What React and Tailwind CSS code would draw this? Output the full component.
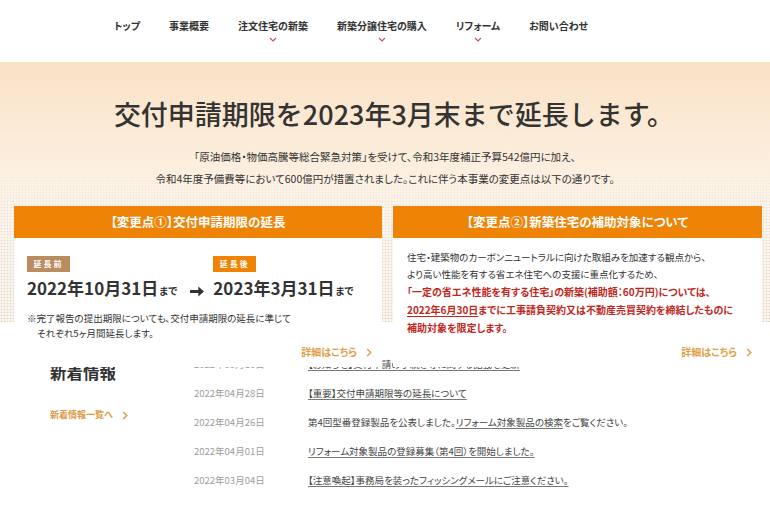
import React from 'react';

const font = { fontFamily: '"Noto Sans CJK JP", "Noto Sans", sans-serif' };

const navItems = [
    { label: 'トップ', sub: false },
    { label: '事業概要', sub: false },
    { label: '注文住宅の新築', sub: true },
    { label: '新築分譲住宅の購入', sub: true },
    { label: 'リフォーム', sub: true },
    { label: 'お問い合わせ', sub: false },
];

const news = [
    { date: '2022年05月10日', parts: [{ t: '【お知らせ】交付申請の手続き等に関する記載を更新', link: true }] },
    { date: '2022年04月28日', parts: [{ t: '【重要】交付申請期限等の延長について', link: true }] },
    { date: '2022年04月26日', parts: [{ t: '第4回型番登録製品を公表しました。', link: false }, { t: 'リフォーム対象製品の検索', link: true }, { t: 'をご覧ください。', link: false }] },
    { date: '2022年04月01日', parts: [{ t: 'リフォーム対象製品の登録募集（第4回）を開始しました。', link: true }] },
    { date: '2022年03月04日', parts: [{ t: '【注意喚起】事務局を装ったフィッシングメールにご注意ください。', link: true }] },
];

const Chevron = ({ className }) => (
    <svg viewBox="0 0 8 5" className={className} fill="none" stroke="currentColor" strokeWidth="1.2">
        <path d="M1 1l3 3 3-3" />
    </svg>
);

const RightChevron = () => (
    <svg viewBox="0 0 6 10" className="w-[6px] h-[9px] ml-[9px]" fill="none" stroke="currentColor" strokeWidth="1.6">
        <path d="M1 1l4 4-4 4" />
    </svg>
);

const MoreLink = () => (
    <div className="mt-auto flex justify-end items-center pr-[10px] pb-[8px] text-[10px] leading-[14px] font-bold text-[#e0a04a]">
        詳細はこちら
        <RightChevron />
    </div>
);

const App = () => {
    return (
        <div className="w-[770px] min-h-[510px] bg-white text-[#333] [font-feature-settings:'palt']" style={font}>
            {/* Header nav */}
            <nav className="h-[62px] bg-white flex pl-[114px] pt-[19px] gap-[29px]">
                {navItems.map((item) => (
                    <div key={item.label} className="flex flex-col items-center">
                        <span className="text-[10px] leading-[14px] font-bold text-[#333]">{item.label}</span>
                        {item.sub && <Chevron className="w-[8px] h-[5px] mt-[4px] text-[#c9505a]" />}
                    </div>
                ))}
            </nav>

            {/* Hero */}
            <section className="relative z-10 h-[260px] bg-[#fdf6ee] bg-[linear-gradient(180deg,#f9e2c5_0%,#fcefdf_40%,rgba(253,246,238,0.5)_58%,rgba(253,246,238,0.2)_100%),radial-gradient(circle,#d8cab8_0.8px,transparent_1.1px)] [background-size:100%_100%,3px_3px]">
                <h1 className="pt-[37px] pl-[18px] text-center text-[27px] leading-[30px] font-medium text-[#333] [font-feature-settings:normal]">
                    交付申請期限を2023年3月末まで延長します。
                </h1>
                <div className="mt-[17px] text-center text-[10.5px] leading-[22px] text-[#333]">
                    <p>「原油価格・物価高騰等総合緊急対策」を受けて、令和3年度補正予算542億円に加え、</p>
                    <p>令和4年度予備費等において600億円が措置されました。これに伴う本事業の変更点は以下の通りです。</p>
                </div>

                <div className="mt-[16px] pl-[14px] grid grid-cols-[368px_369px] gap-[11px]">
                    {/* Card 1 */}
                    <div className="flex flex-col">
                        <div className="h-[32px] bg-[#ef8305] flex items-center justify-center text-white text-[12.5px] font-bold">
                            【変更点①】交付申請期限の延長
                        </div>
                        <div className="h-[129px] bg-white flex flex-col pl-[13px] pt-[18px]">
                            <div className="flex items-end">
                                <div>
                                    <div className="w-[43px] h-[16px] bg-[#ba8d60] text-white text-[8px] font-bold tracking-[2px] flex items-center justify-center">延長前</div>
                                    <div className="mt-[5px] text-[17px] leading-[22px] font-bold text-[#333]">
                                        2022年10月31日<span className="text-[10px] ml-[1px]">まで</span>
                                    </div>
                                </div>
                                <svg viewBox="0 0 16 14" className="w-[14px] h-[13px] ml-[13px] mr-[9px] mb-[4px] text-[#333]" fill="currentColor">
                                    <path d="M0 5.2h9.5V1.2L16 7l-6.5 5.8V8.8H0z" />
                                </svg>
                                <div>
                                    <div className="w-[43px] h-[16px] bg-[#ef8305] text-white text-[8px] font-bold tracking-[2px] flex items-center justify-center">延長後</div>
                                    <div className="mt-[5px] text-[17px] leading-[22px] font-bold text-[#333]">
                                        2023年3月31日<span className="text-[10px] ml-[1px]">まで</span>
                                    </div>
                                </div>
                            </div>
                            <div className="mt-[9px] text-[9.5px] leading-[15px] text-[#333]">
                                <p>※完了報告の提出期限についても、交付申請期限の延長に準じて</p>
                                <p className="pl-[10px]">それぞれ5ヶ月間延長します。</p>
                            </div>
                            <MoreLink />
                        </div>
                    </div>

                    {/* Card 2 */}
                    <div className="flex flex-col">
                        <div className="h-[32px] bg-[#ef8305] flex items-center justify-center text-white text-[12.5px] font-bold">
                            【変更点②】新築住宅の補助対象について
                        </div>
                        <div className="h-[129px] bg-white flex flex-col pl-[14px] pt-[11px]">
                            <div className="text-[9.5px] leading-[17px] text-[#333]">
                                <p>住宅・建築物のカーボンニュートラルに向けた取組みを加速する観点から、</p>
                                <p>より高い性能を有する省エネ住宅への支援に重点化するため、</p>
                            </div>
                            <div className="text-[10px] leading-[18px] font-bold text-[#c0281e]">
                                <p>「一定の省エネ性能を有する住宅」の新築(補助額：60万円)については、</p>
                                <p><span className="underline underline-offset-2">2022年6月30日</span>までに工事請負契約又は不動産売買契約を締結したものに</p>
                                <p>補助対象を限定します。</p>
                            </div>
                            <MoreLink />
                        </div>
                    </div>
                </div>
            </section>

            {/* News */}
            <section className="flex pl-[50px] pt-[28px] pb-[20px]">
                <div className="w-[144px] pt-[10px]">
                    <h2 className="text-[16.5px] leading-[24px] font-bold text-[#333]">新着情報</h2>
                    <div className="mt-[24px] flex items-center text-[9px] leading-[14px] font-bold text-[#e09a44]">
                        新着情報一覧へ
                        <RightChevron />
                    </div>
                </div>
                <div className="flex flex-col">
                    {news.map((n) => (
                        <div key={n.date} className="h-[29px] flex items-center">
                            <span className="w-[114px] text-[9.5px] text-[#9d9d9d]">{n.date}</span>
                            <span className="text-[9.5px] text-[#444]">
                                {n.parts.map((p, i) => (
                                    <span key={i} className={p.link ? 'underline underline-offset-2 decoration-[#777]' : ''}>{p.t}</span>
                                ))}
                            </span>
                        </div>
                    ))}
                </div>
            </section>
        </div>
    );
};

export default App;
